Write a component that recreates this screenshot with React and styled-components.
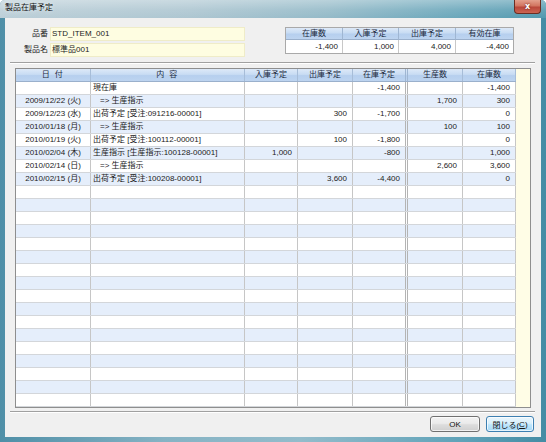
import React from "react";
import styled, { createGlobalStyle, css } from "styled-components";

const Global = createGlobalStyle`
  html, body { margin: 0; padding: 0; background: #ffffff; }
  body { font-family: "Liberation Sans", "Noto Sans CJK JP", sans-serif; }
  * { box-sizing: border-box; }
`;

const FONT = `"Liberation Sans", "Noto Sans CJK JP", sans-serif`;

const Window = styled.div`
  width: 546px;
  height: 442px;
  display: flex;
  flex-direction: column;
  background: linear-gradient(90deg, #4f8fa7 0%, #86b3c4 30%, #93bccb 55%, #5fa2b8 85%, #448ca4 100%);
  border-radius: 5px 5px 0 0;
  overflow: hidden;
  font-family: ${FONT};
  font-size: 8px;
  color: #222;
`;

const TitleBar = styled.div`
  height: 18px;
  flex: none;
  display: flex;
  justify-content: space-between;
  align-items: flex-start;
  padding: 0 5px 0 5px;
  background:
    linear-gradient(180deg, rgba(255,255,255,0.35) 0%, rgba(255,255,255,0.1) 55%, rgba(0,0,0,0) 100%),
    linear-gradient(90deg, #bccfd8 0%, #adc6d1 35%, #94bac8 60%, #68a6ba 85%, #5399af 100%);
`;

const Title = styled.span`
  font-size: 8px;
  line-height: 16px;
  color: #111;
  text-shadow: 0 0 4px rgba(255,255,255,0.8);
`;

const CloseBtn = styled.div`
  width: 27px;
  height: 14px;
  display: flex;
  align-items: center;
  justify-content: center;
  border: 1px solid #6b2d22;
  border-top: none;
  border-radius: 0 0 4px 4px;
  background: linear-gradient(180deg, #e3a08d 0%, #d27560 45%, #b9473a 55%, #cb6552 100%);
  color: #fff;
  font-family: "DejaVu Sans", sans-serif;
  font-size: 8px;
  font-weight: bold;
  text-shadow: 0 0 2px #5a1a10;
`;

const Frame = styled.div`
  flex: 1;
  display: flex;
  padding: 0 5px 5px 5px;
`;

const Client = styled.div`
  flex: 1;
  display: flex;
  flex-direction: column;
  background: #f0f0f0;
  padding: 9px 6px 0 5px;
`;

const TopSection = styled.div`
  display: flex;
  align-items: flex-start;
  height: 30px;
`;

const Fields = styled.div`
  display: grid;
  grid-template-columns: 38px 195px;
  grid-auto-rows: 14px;
  column-gap: 2px;
  row-gap: 2px;
`;

const FieldLabel = styled.div`
  text-align: right;
  line-height: 14px;
  white-space: nowrap;
`;

const FieldBox = styled.div`
  background: #fefde1;
  border: 1px solid #efecc8;
  line-height: 12px;
  padding-left: 1px;
  white-space: nowrap;
`;

const Summary = styled.div`
  margin-left: 40px;
  display: grid;
  grid-template-columns: 57px 56px 57px 57px;
  border: 1px solid #a9a9a9;
  background: #fff;
`;

const headerBg = css`
  background: linear-gradient(180deg, #dde9f8 0%, #c8dcf3 45%, #b6cfee 55%, #bdd4f0 100%);
`;

const SumHead = styled.div`
  ${headerBg};
  height: 12px;
  line-height: 12px;
  text-align: center;
  color: #1b2a3e;
  border-right: 1px solid #9fb6d2;
  border-bottom: 1px solid #9ab0cc;
  &:nth-child(4) { border-right: none; }
`;

const SumVal = styled.div`
  height: 13px;
  line-height: 13px;
  text-align: right;
  padding-right: 4px;
  border-right: 1px solid #c8c8c8;
  &:nth-child(8) { border-right: none; }
`;

const Separator = styled.div`
  height: 2px;
  flex: none;
  border-top: 1px solid #a0a0a0;
  border-bottom: 1px solid #ffffff;
  margin-top: ${(p) => p.$mt}px;
`;

const GridBox = styled.div`
  margin: 4px 4px 0 5px;
  height: 340px;
  flex: none;
  display: flex;
  border: 1px solid #8e8e8e;
  background: #fff;
`;

const Table = styled.div`
  width: 500px;
  display: flex;
  flex-direction: column;
`;

const Filler = styled.div`
  flex: 1;
  background: #fffde6;
`;

const Row = styled.div`
  display: flex;
  height: 13px;
  flex: none;
  background: ${(p) => (p.$alt ? "#e5eefb" : "#ffffff")};
  border-bottom: 1px solid #d3d6da;
`;

const HeadRow = styled.div`
  display: flex;
  height: 13px;
  flex: none;
  ${headerBg};
  border-bottom: 1px solid #9ab0cc;
`;

const Cell = styled.div`
  width: ${(p) => p.$w}px;
  flex: none;
  line-height: 12px;
  white-space: nowrap;
  overflow: hidden;
  border-right: ${(p) => (p.$double ? "3px double #b4b4b4" : "1px solid #c6c6c6")};
  text-align: ${(p) => p.$align || "left"};
  padding: ${(p) =>
    p.$align === "right" ? "0 5px 0 0" : p.$align === "center" ? "0" : `0 0 0 ${p.$indent || 2}px`};
`;

const HeadCell = styled(Cell)`
  text-align: center;
  padding: 0;
  color: #1b2a3e;
  letter-spacing: ${(p) => (p.$spaced ? "1.5px" : "0")};
  border-right: ${(p) => (p.$double ? "3px double #9fb6d2" : "1px solid #a7bdd8")};
`;

const Footer = styled.div`
  display: flex;
  justify-content: flex-end;
  gap: 6px;
  margin-top: 3px;
  padding-right: 1px;
`;

const Button = styled.div`
  width: ${(p) => p.$w}px;
  height: 16px;
  display: flex;
  align-items: center;
  justify-content: center;
  border-radius: 3px;
  font-size: 8px;
  border: 1px solid ${(p) => (p.$primary ? "#3c7fb1" : "#707070")};
  background: ${(p) =>
    p.$primary
      ? "linear-gradient(180deg, #eaf6fd 0%, #d9f0fc 45%, #bee6fd 55%, #a7d9f5 100%)"
      : "linear-gradient(180deg, #f2f2f2 0%, #ebebeb 45%, #dddddd 55%, #cfcfcf 100%)"};
  box-shadow: inset 0 0 0 1px rgba(255,255,255,0.7);
  color: #111;
`;

const Under = styled.span`
  text-decoration: underline;
`;

const cols = [
  { w: 75, align: "center", label: "日 付", spaced: true },
  { w: 154, align: "left", label: "内 容", spaced: true },
  { w: 53, align: "right", label: "入庫予定" },
  { w: 55, align: "right", label: "出庫予定" },
  { w: 55, align: "right", label: "在庫予定", double: true },
  { w: 55, align: "right", label: "生産数" },
  { w: 53, align: "right", label: "在庫数" },
];

const data = [
  ["", "現在庫", "", "", "-1,400", "", "-1,400"],
  ["2009/12/22 (火)", "=> 生産指示", "", "", "", "1,700", "300", 9],
  ["2009/12/23 (水)", "出荷予定 [受注:091216-00001]", "", "300", "-1,700", "", "0"],
  ["2010/01/18 (月)", "=> 生産指示", "", "", "", "100", "100", 9],
  ["2010/01/19 (火)", "出荷予定 [受注:100112-00001]", "", "100", "-1,800", "", "0"],
  ["2010/02/04 (木)", "生産指示 [生産指示:100128-00001]", "1,000", "", "-800", "", "1,000"],
  ["2010/02/14 (日)", "=> 生産指示", "", "", "", "2,600", "3,600", 9],
  ["2010/02/15 (月)", "出荷予定 [受注:100208-00001]", "", "3,600", "-4,400", "", "0"],
];

const rows = Array.from({ length: 25 }, (_, i) => data[i] || ["", "", "", "", "", "", ""]);

export default function App() {
  return (
    <>
      <Global />
      <Window>
        <TitleBar>
          <Title>製品在庫予定</Title>
          <CloseBtn>x</CloseBtn>
        </TitleBar>
        <Frame>
          <Client>
            <TopSection>
              <Fields>
                <FieldLabel>品番</FieldLabel>
                <FieldBox>STD_ITEM_001</FieldBox>
                <FieldLabel>製品名</FieldLabel>
                <FieldBox>標準品001</FieldBox>
              </Fields>
              <Summary>
                <SumHead>在庫数</SumHead>
                <SumHead>入庫予定</SumHead>
                <SumHead>出庫予定</SumHead>
                <SumHead>有効在庫</SumHead>
                <SumVal>-1,400</SumVal>
                <SumVal>1,000</SumVal>
                <SumVal>4,000</SumVal>
                <SumVal>-4,400</SumVal>
              </Summary>
            </TopSection>
            <Separator $mt={5} />
            <GridBox>
              <Table>
                <HeadRow>
                  {cols.map((c) => (
                    <HeadCell key={c.label} $w={c.w} $double={c.double} $spaced={c.spaced}>
                      {c.label}
                    </HeadCell>
                  ))}
                </HeadRow>
                {rows.map((r, i) => (
                  <Row key={i} $alt={i % 2 === 1}>
                    {cols.map((c, j) => (
                      <Cell
                        key={j}
                        $w={c.w}
                        $align={c.align}
                        $double={c.double}
                        $indent={j === 1 ? r[7] : undefined}
                      >
                        {r[j]}
                      </Cell>
                    ))}
                  </Row>
                ))}
              </Table>
              <Filler />
            </GridBox>
            <Separator $mt={3} />
            <Footer>
              <Button $w={50}>OK</Button>
              <Button $w={48} $primary>
                閉じる(<Under>C</Under>)
              </Button>
            </Footer>
          </Client>
        </Frame>
      </Window>
    </>
  );
}
